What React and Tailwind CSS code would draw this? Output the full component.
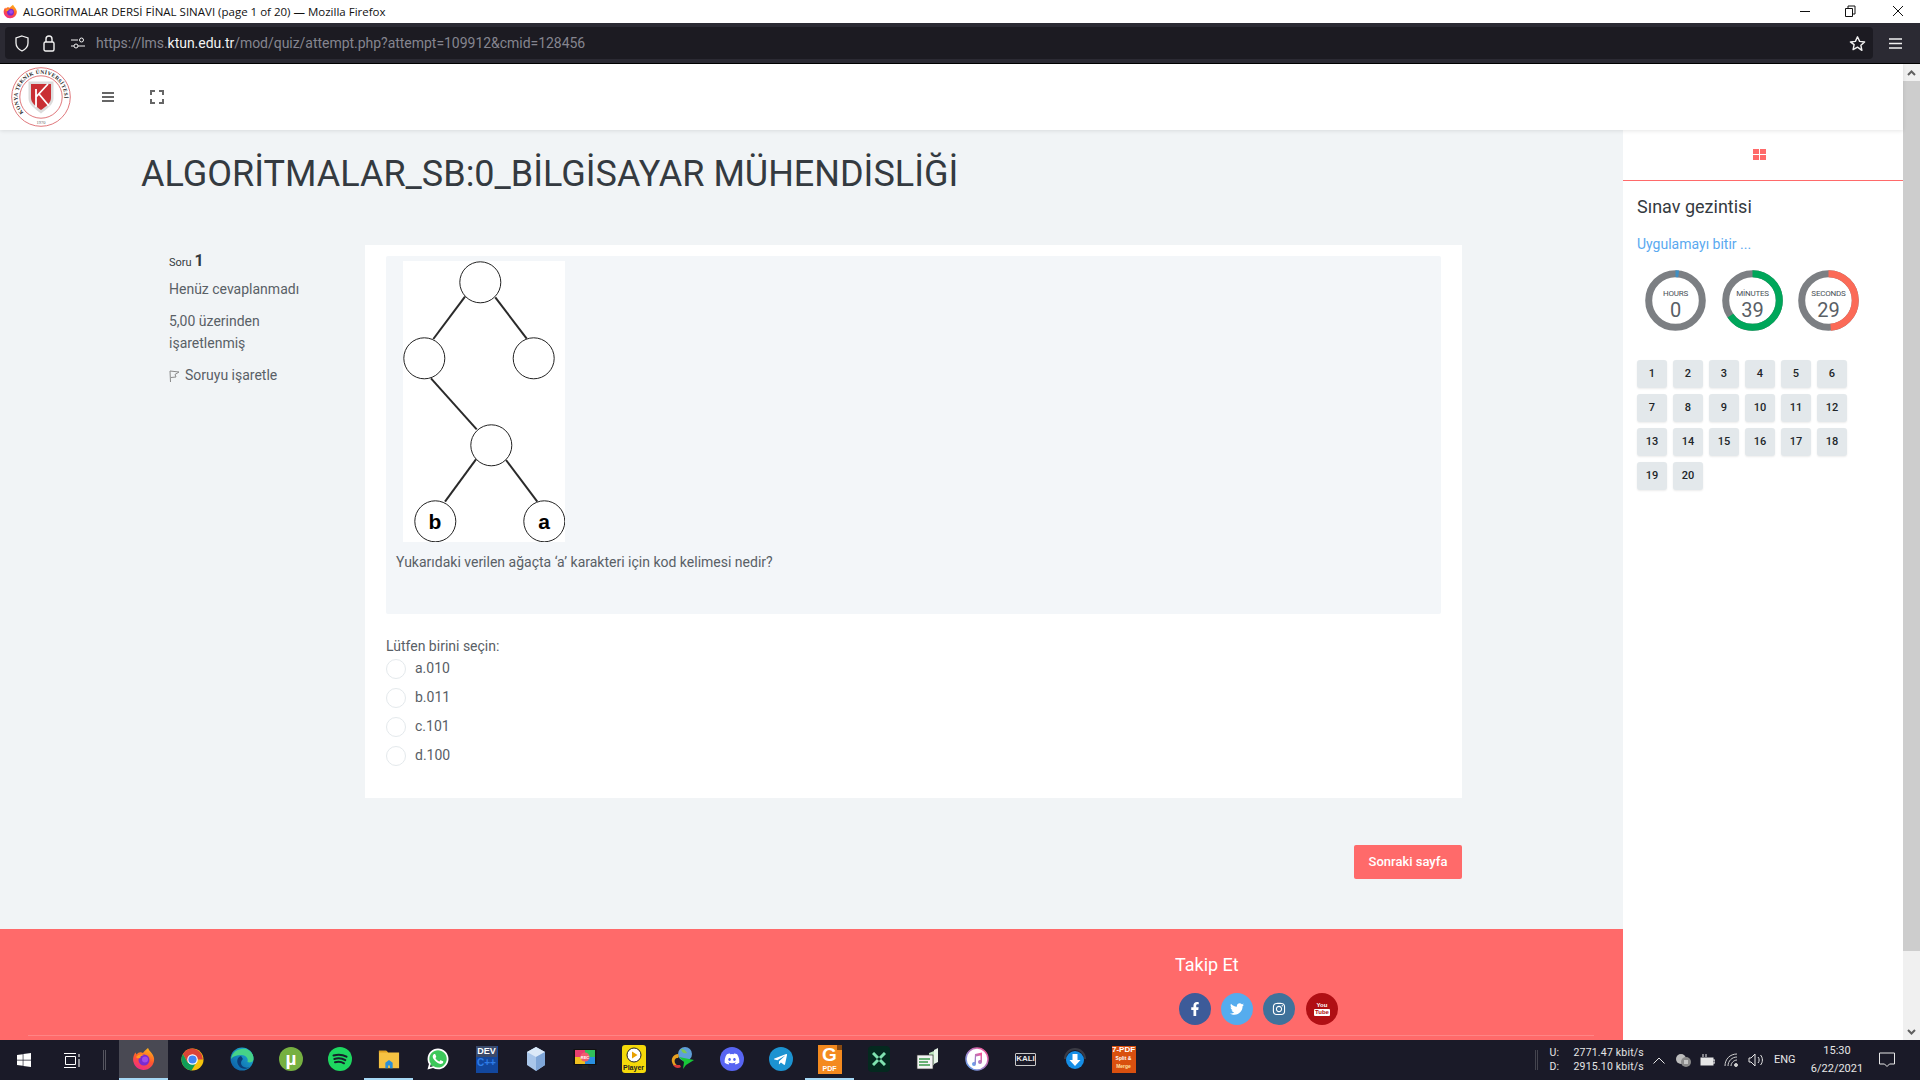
import React from "react";
import { FaFacebookF, FaTwitter, FaInstagram, FaWhatsapp, FaDiscord, FaTelegramPlane, FaWindows } from "react-icons/fa";

const Firefox = ({ s = 24 }) => (
  <svg width={s} height={s} viewBox="0 0 24 24">
    <defs>
      <linearGradient id="ffg" x1="0.7" y1="0" x2="0.3" y2="1">
        <stop offset="0" stopColor="#ffb31a" />
        <stop offset="0.5" stopColor="#ff5a2c" />
        <stop offset="1" stopColor="#f0288a" />
      </linearGradient>
    </defs>
    <path d="M16 1c1 3 5 5 6 10a10.5 10.5 0 1 1-20.6-1C2 8 2.5 6.5 3.5 5.5c.2 1 .7 1.600 1.300 2C6 5 9 4.500 11 6c1-2 3-3 5-5z" fill="url(#ffg)" />
    <circle cx="12" cy="13" r="5.500" fill="#7a2bd0" />
    <circle cx="13" cy="12.500" r="3" fill="#a04be8" />
    <path d="M4 10c2-3 6-3 8-2-2 .5-4 1-3.500 3-2 0-3 1-4.500-1z" fill="#ff9a1f" />
  </svg>
);

const Chrome = () => (
  <svg width="23" height="23" viewBox="0 0 24 24">
    <circle cx="12" cy="12" r="11.500" fill="#f4c20d" />
    <path d="M12 .5A11.500 11.500 0 0 0 2 6.300L7 15l5-3h10.900A11.500 11.500 0 0 0 12 .5z" fill="#db4437" />
    <path d="M2 6.300A11.500 11.500 0 0 0 11 23.500L16 15H7z" fill="#0f9d58" />
    <circle cx="12" cy="12" r="5.500" fill="#fff" />
    <circle cx="12" cy="12" r="4.300" fill="#4285f4" />
  </svg>
);

const Edge = () => (
  <svg width="24" height="24" viewBox="0 0 24 24">
    <defs>
      <linearGradient id="edg" x1="0" y1="1" x2="1" y2="0">
        <stop offset="0" stopColor="#0c59a4" />
        <stop offset="1" stopColor="#1fb6d8" />
      </linearGradient>
    </defs>
    <circle cx="12" cy="12" r="11.500" fill="url(#edg)" />
    <path d="M1 12C2 4 10 .5 16 2c5 1.500 8 6 7.500 10.500-.3 3-4 3.500-6 2.500 1-3-1-7-6-7-5 0-8 1-10.500 4z" fill="#46d288" />
    <path d="M11 9c-4 1-5 6-2 10 2 3 7 4 11 1-5 2-9-1-9-4 0-2 1-3 2-4-1-1-1-2-2-3z" fill="#0b3d78" />
  </svg>
);

const Torrent = () => (
  <svg width="24" height="24" viewBox="0 0 24 24">
    <circle cx="12" cy="12" r="12" fill="#76b041" />
    <text x="12" y="18" textAnchor="middle" fontFamily="Liberation Sans, sans-serif" fontWeight="700" fontSize="19" fill="#fff">µ</text>
  </svg>
);

const Spotify = () => (
  <svg width="24" height="24" viewBox="0 0 24 24">
    <circle cx="12" cy="12" r="12" fill="#1ed760" />
    <path d="M5.500 8.500c4-1.200 9-1 13 1.200M6.300 12c3.500-1 7.700-.8 11 1.100M7 15.300c3-.8 6.300-.6 9 1" fill="none" stroke="#15202b" strokeWidth="2" strokeLinecap="round" />
  </svg>
);

const Folder = () => (
  <svg width="22" height="22" viewBox="0 0 24 24">
    <path d="M1 3h8l2 2h12v17H1z" fill="#f5c242" />
    <path d="M1 3h8l2 2H1z" fill="#e0a020" />
    <path d="M8 22v-6l4-3 4 3v6h-3v-3h-2v3z" fill="#2a8fd8" />
  </svg>
);

const Whats = () => (
  <svg width="24" height="24" viewBox="0 0 24 24">
    <circle cx="12.200" cy="12" r="9.500" fill="#3cc85a" />
    <foreignObject x="0" y="0" width="24" height="24">
      <div className="flex h-6 w-6 items-center justify-center text-white">
        <FaWhatsapp size={24} />
      </div>
    </foreignObject>
  </svg>
);

const Dev = () => (
  <div className="flex h-[27px] w-[22px] flex-col items-center bg-[#12479e] font-['Liberation_Sans',sans-serif] font-bold leading-[11px]">
    <span className="bg-[#3b4a6b] px-[1px] text-[9px] text-white">DEV</span>
    <span className="text-[10px] text-[#2f7de8]">C++</span>
  </div>
);

const Cube = () => (
  <svg width="24" height="26" viewBox="0 0 24 26">
    <path d="M12 1l9 5v13l-9 6-9-6V6z" fill="#a9c6ea" />
    <path d="M12 1l9 5-9 5-9-5z" fill="#dbe9f8" />
    <path d="M12 11l9-5v13l-9 6z" fill="#7fa6d8" />
  </svg>
);

const Rec = () => (
  <svg width="24" height="24" viewBox="0 0 24 24">
    <rect x="0.500" y="2" width="23" height="16" fill="#111" />
    <rect x="2" y="3" width="10" height="7" fill="#e83f6f" />
    <rect x="12" y="3" width="10" height="7" fill="#30c05a" />
    <rect x="2" y="10" width="10" height="7" fill="#f0c020" />
    <rect x="12" y="10" width="10" height="7" fill="#2a8fe0" />
    <circle cx="12" cy="10" r="4.500" fill="#f25c6f" />
    <text x="12" y="11.500" textAnchor="middle" fontSize="4" fontWeight="700" fill="#fff" fontFamily="Liberation Sans, sans-serif">REC</text>
    <rect x="9" y="18" width="6" height="3" fill="#222" />
    <rect x="6" y="21" width="12" height="1.500" fill="#222" />
  </svg>
);

const Player = () => (
  <div className="flex h-[28px] w-[24px] flex-col items-center rounded-[3px] bg-[#f5d90a] pt-[2px]">
    <svg width="16" height="16" viewBox="0 0 16 16">
      <circle cx="8" cy="8" r="7" fill="#fff" stroke="#222" />
      <path d="M6 4.500l5.500 3.500L6 11.500z" fill="#e8a000" />
    </svg>
    <span className="font-['Liberation_Sans',sans-serif] text-[7px] font-bold leading-[9px] text-[#222]">Player</span>
  </div>
);

const Idm = () => (
  <svg width="26" height="26" viewBox="0 0 26 26">
    <circle cx="15" cy="8" r="7" fill="#5f9fd8" />
    <path d="M11 3c3 0 5 2 6 4-3 1-5 0-6-4z" fill="#7ec850" />
    <path d="M2 16c-1-4 2-8 6-8 1 1 1 3 0 4-3 0-4 2-3 5 1 2 3 3 5 3-4 2-7 0-8-4z" fill="#e8a020" />
    <path d="M3 19c2 3 5 4 8 2l-1-2c-2 0-5 0-7 0z" fill="#d83a3a" />
    <path d="M24 14l-15-3 5 5-1 7 3-4z" fill="#18c838" />
  </svg>
);

const Round = ({ bg, children }) => (
  <div className={`flex h-[24px] w-[24px] items-center justify-center rounded-full text-white ${bg}`}>{children}</div>
);

const Foxit = () => (
  <div className="relative flex h-[29px] w-[24px] flex-col items-center bg-[#f48a1f] font-['Liberation_Sans',sans-serif] font-bold text-white">
    <span className="text-[19px] leading-[20px]">G</span>
    <span className="text-[7px] leading-[8px]">PDF</span>
    <span className="absolute right-0 top-0 h-[5px] w-[5px] bg-[#8a4a10]" />
  </div>
);

const XIcon = () => (
  <div className="flex h-[26px] w-[22px] items-center justify-center rounded-[4px] bg-[#04291f]">
    <svg width="14" height="14" viewBox="0 0 14 14">
      <path d="M1 1l5 5M13 1L8 6M1 13l5-5M13 13L8 8" stroke="#7fe3b0" strokeWidth="3" />
    </svg>
  </div>
);

const Speed = () => (
  <svg width="24" height="26" viewBox="0 0 24 26">
    <path d="M18 4l4-2v14l-4 2z" fill="#e8f5e8" />
    <path d="M13 7l5-2v14l-5 2z" fill="#bfe5bf" />
    <rect x="1" y="9" width="16" height="14" fill="#f4f4f4" stroke="#333" strokeWidth="0.700" />
    <path d="M3 13h11M3 16h9M3 19h11" stroke="#3a9a4a" strokeWidth="1.300" />
  </svg>
);

const Itunes = () => (
  <svg width="24" height="26" viewBox="0 0 24 24">
    <defs>
      <linearGradient id="itg" x1="0" y1="1" x2="1" y2="0">
        <stop offset="0" stopColor="#5aa8f5" />
        <stop offset="1" stopColor="#ff4f8f" />
      </linearGradient>
    </defs>
    <circle cx="12" cy="12" r="11" fill="#fff" stroke="url(#itg)" strokeWidth="1.500" />
    <path d="M10 7l7-1.500V15a2 2 0 1 1-1.500-2V8.500L11 9.500V17a2 2 0 1 1-1.500-2z" fill="url(#itg)" />
  </svg>
);

const Kali = () => (
  <div className="flex h-[13px] w-[21px] items-center justify-center rounded-[1px] border border-[#c9c9c9] font-['Liberation_Sans',sans-serif] text-[8px] font-bold leading-none text-[#e8e8e8]">
    KALI
  </div>
);

const Download = () => (
  <svg width="26" height="26" viewBox="0 0 26 26">
    <path d="M3 13a10 10 0 0 1 20 0" fill="none" stroke="#3a3a44" strokeWidth="2" />
    <circle cx="13" cy="14" r="9" fill="#168ee6" />
    <path d="M10.500 8h5v6h3L13 20l-5.500-6h3z" fill="#fff" />
  </svg>
);

const SevenPdf = () => (
  <div className="flex h-[27px] w-[24px] flex-col items-center overflow-hidden bg-[#d9500f] font-['Liberation_Sans',sans-serif] font-bold leading-[8px] text-white">
    <span className="text-[8px]">7-PDF</span>
    <span className="text-[5px]">Split &amp;</span>
    <span className="text-[5px] text-[#ffe0a0]">Merge</span>
  </div>
);

const taskbarApps = [
  { icon: <Firefox />, active: true, on: true },
  { icon: <Chrome /> },
  { icon: <Edge /> },
  { icon: <Torrent /> },
  { icon: <Spotify /> },
  { icon: <Folder />, on: true },
  { icon: <Whats /> },
  { icon: <Dev /> },
  { icon: <Cube /> },
  { icon: <Rec /> },
  { icon: <Player /> },
  { icon: <Idm /> },
  { icon: <Round bg="bg-[#5865f2]"><FaDiscord size={16} /></Round> },
  { icon: <Round bg="bg-[#1c93d1]"><FaTelegramPlane size={15} /></Round> },
  { icon: <Foxit />, on: true },
  { icon: <XIcon /> },
  { icon: <Speed /> },
  { icon: <Itunes /> },
  { icon: <Kali /> },
  { icon: <Download /> },
  { icon: <SevenPdf /> },
];

const Logo = () => (
  <svg width="60" height="60" viewBox="0 0 60 60">
    <circle cx="30" cy="30" r="29.300" fill="#fff" stroke="#e0787c" strokeWidth="1" />
    <circle cx="30" cy="30" r="21.200" fill="#fff" stroke="#e0787c" strokeWidth="1" />
    <defs>
      <path id="logoarc" d="M12.500 45.500A23.300 23.300 0 1 1 47.500 45.500" fill="none" />
    </defs>
    <text fontFamily="Liberation Serif, serif" fontWeight="700" fontSize="5.400" fill="#222" letterSpacing="0.350">
      <textPath href="#logoarc">KONYA TEKNİK ÜNİVERSİTESİ</textPath>
    </text>
    <text x="30" y="57" textAnchor="middle" fontFamily="Liberation Serif, serif" fontSize="4.500" fill="#666">1970</text>
    <path d="M17.500 14.500h25v17c0 6-6.500 10.500-12.500 15-6-4.500-12.500-9-12.500-15z" fill="#dcdcdc" />
    <path d="M20 17h20v14c0 5-5 8.500-10 12-5-3.500-10-7-10-12z" fill="#c92f33" />
    <path d="M25 22v18M25 30l12-13M28 27l10 12" stroke="#fff" strokeWidth="1.800" fill="none" />
  </svg>
);

const Tree = () => {
  const circles = [
    [77.3, 21.3],
    [21.3, 97.3],
    [130.7, 97.3],
    [88.3, 184.3],
    [32.3, 260.3],
    [141.3, 260.3],
  ];
  const lines = [
    [62, 35.7, 30.3, 78],
    [92.3, 36.3, 123.7, 77.7],
    [28, 117.3, 73.7, 168.3],
    [73, 198.3, 42, 240.7],
    [103, 199, 134.3, 240.7],
  ];
  return (
    <svg width="162" height="281" viewBox="0 0 162 281" className="block bg-white">
      {lines.map((l, i) => (
        <line key={i} x1={l[0]} y1={l[1]} x2={l[2]} y2={l[3]} stroke="#2a2a2a" strokeWidth="2" />
      ))}
      {circles.map((c, i) => (
        <circle key={i} cx={c[0]} cy={c[1]} r="20.500" fill="#fff" stroke="#222" strokeWidth="1" />
      ))}
      <text x="32" y="268" textAnchor="middle" fontFamily="Liberation Sans, sans-serif" fontWeight="700" fontSize="21" fill="#000">b</text>
      <text x="141" y="268" textAnchor="middle" fontFamily="Liberation Sans, sans-serif" fontWeight="700" fontSize="21" fill="#000">a</text>
    </svg>
  );
};

const Timer = ({ label, value, deg, color }) => {
  const r = 26.8;
  const c = 2 * Math.PI * r;
  return (
    <svg width="61" height="61" viewBox="0 0 61 61">
      <circle cx="30.500" cy="30.500" r={r} fill="none" stroke="#7c7f83" strokeWidth="7" />
      <circle
        cx="30.500"
        cy="30.500"
        r={r}
        fill="none"
        stroke={color}
        strokeWidth="7"
        strokeDasharray={`${(deg / 360) * c} ${c}`}
        transform="rotate(-90 30.500 30.500)"
      />
      <text x="30.500" y="26" textAnchor="middle" fontFamily="Roboto, sans-serif" fontSize="8" letterSpacing="-0.200" fill="#495057">{label}</text>
      <text x="30.500" y="47" textAnchor="middle" fontFamily="Roboto, sans-serif" fontSize="20" fill="#596066">{value}</text>
    </svg>
  );
};

const navNumbers = Array.from({ length: 20 }, (_, i) => i + 1);
const options = ["a.010", "b.011", "c.101", "d.100"];

export default function App() {
  return (
    <div className="flex h-[1080px] w-[1920px] flex-col overflow-hidden bg-white font-['Roboto',sans-serif] text-[14px] text-[#596066]">
      {/* Window title bar */}
      <div className="flex h-[23px] shrink-0 items-center bg-white pl-[3px]">
        <Firefox s={15} />
        <span className="ml-[5px] font-['Open_Sans',sans-serif] text-[11.500px] text-[#111]">
          ALGORİTMALAR DERSİ FİNAL SINAVI (page 1 of 20) — Mozilla Firefox
        </span>
        <div className="ml-auto flex items-center pb-[2px] text-[#111]">
          <svg width="45" height="20" viewBox="0 0 45 20">
            <path d="M17 10.500h10" stroke="#111" />
          </svg>
          <svg width="45" height="20" viewBox="0 0 45 20">
            <path d="M17.500 7.500h7v8h-7zM20 7.500V5h7v8h-2.500" fill="none" stroke="#111" />
          </svg>
          <svg width="47" height="20" viewBox="0 0 47 20">
            <path d="M20 5l10 10M30 5L20 15" stroke="#111" />
          </svg>
        </div>
      </div>

      {/* Browser toolbar */}
      <div className="flex h-[41px] shrink-0 items-center border-b border-black bg-[#2b2a33] pl-[5px] pr-[15px]">
        <div className="flex h-[32px] w-[1868px] items-center rounded-[4px] bg-[#1c1b22] pl-[10px] pr-[7px]">
          <svg width="14" height="17" viewBox="0 0 14 17" fill="none" stroke="#f2f2f2" strokeWidth="1.300">
            <path d="M7 1l6 2v5c0 4-3 6.500-6 8-3-1.500-6-4-6-8V3z" />
          </svg>
          <svg className="ml-[14px]" width="12" height="17" viewBox="0 0 12 17" fill="none" stroke="#f2f2f2" strokeWidth="1.400">
            <rect x="1" y="7" width="10" height="9" rx="1.500" />
            <path d="M3 7V4a3 3 0 0 1 6 0v3" />
          </svg>
          <svg className="ml-[16px]" width="14" height="12" viewBox="0 0 14 12" fill="none" stroke="#f2f2f2" strokeWidth="1">
            <path d="M0 3h7M0 9h3" />
            <circle cx="10.500" cy="3" r="2" />
            <circle cx="5" cy="9" r="2" />
            <path d="M7 9h7" />
          </svg>
          <span className="ml-[11px] pt-[1px] text-[14px] tracking-[-0.030px] text-[#85858f]">
            https://lms.<span className="text-[#f2f2f2]">ktun.edu.tr</span>/mod/quiz/attempt.php?attempt=109912&amp;cmid=128456
          </span>
          <svg className="ml-auto" width="17" height="17" viewBox="0 0 24 24" fill="none" stroke="#f2f2f2" strokeWidth="2" strokeLinejoin="round">
            <path d="M12 2.500l3 6.500 7 .8-5.200 4.800 1.400 7L12 17.200 5.800 20.600l1.400-7L2 9.800 9 9z" />
          </svg>
        </div>
        <svg className="ml-[16px]" width="13" height="11" viewBox="0 0 13 11" stroke="#f2f2f2" strokeWidth="1.300">
          <path d="M0 1h13M0 5.500h13M0 10h13" />
        </svg>
      </div>

      <div className="flex h-[976px] shrink-0">
        <div className="flex w-[1903px] flex-col">
          {/* Site header */}
          <div className="relative z-10 flex h-[66px] shrink-0 items-center bg-white pl-[11px] shadow-[0_1px_4px_rgba(0,0,0,0.1)]">
            <Logo />
            <svg className="ml-[31px]" width="12" height="10" viewBox="0 0 12 10" stroke="#666" strokeWidth="2">
              <path d="M0 1h12M0 5h12M0 9h12" />
            </svg>
            <svg className="ml-[36px]" width="14" height="14" viewBox="0 0 14 14" fill="none" stroke="#666" strokeWidth="2">
              <path d="M1 5V1h4M9 1h4v4M13 9v4H9M5 13H1V9" />
            </svg>
          </div>

          <div className="flex h-[910px] shrink-0">
            {/* Main column */}
            <div className="flex w-[1623px] flex-col bg-[#f1f4f6]">
              <h1 className="pl-[141px] pt-[22px] text-[36px] font-normal leading-[44px] text-[#343a40]">
                ALGORİTMALAR_SB:0_BİLGİSAYAR MÜHENDİSLİĞİ
              </h1>
              <div className="mt-[49px] flex pl-[169px]">
                <div className="w-[196px] pt-[6px]">
                  <div className="flex items-baseline text-[#343a40]">
                    <span className="text-[11px]">Soru</span>
                    <span className="ml-[3px] text-[16px] font-bold leading-[20px]">1</span>
                  </div>
                  <div className="mt-[6px] leading-[22px]">Henüz cevaplanmadı</div>
                  <div className="mt-[10px] w-[120px] leading-[22px]">5,00 üzerinden işaretlenmiş</div>
                  <div className="mt-[10px] flex items-center leading-[22px]">
                    <svg className="mt-[3px]" width="11" height="14" viewBox="0 0 11 14" fill="none" stroke="#8a8a8a" strokeWidth="1">
                      <path d="M1.500 13L1 2l9 1-4 2.500L7 8 2 8.500" />
                    </svg>
                    <span className="ml-[5px]">Soruyu işaretle</span>
                  </div>
                </div>
                <div className="h-[553px] w-[1097px] bg-white px-[21px] pt-[11px]">
                  <div className="h-[358px] rounded-[2px] bg-[#f3f6f9] pl-[17px] pt-[5px]">
                    <Tree />
                    <p className="-ml-[7px] mt-[9px] leading-[22px]">
                      Yukarıdaki verilen ağaçta ‘a’ karakteri için kod kelimesi nedir?
                    </p>
                  </div>
                  <div className="mt-[21px] leading-[22px]">Lütfen birini seçin:</div>
                  <div className="-mt-[3px] flex flex-col">
                    {options.map((o) => (
                      <div key={o} className="flex h-[29px] items-center">
                        <span className="h-[20px] w-[20px] rounded-full border border-[#e4e9ec] bg-white" />
                        <span className="ml-[9px]">{o}</span>
                      </div>
                    ))}
                  </div>
                </div>
              </div>
              <div className="mt-[47px] flex justify-end pr-[161px]">
                <div className="flex h-[34px] w-[108px] items-center justify-center rounded-[2px] bg-[#ff6a6a] text-[13px] font-medium text-white">
                  Sonraki sayfa
                </div>
              </div>
              {/* Footer */}
              <div className="mt-auto flex h-[111px] shrink-0 flex-col bg-[#ff6a6a]">
                <div className="pl-[1175px] pt-[25px] text-[18px] leading-[22px] text-white">Takip Et</div>
                <div className="mt-[17px] flex gap-[10px] pl-[1179px]">
                  <span className="flex h-[32px] w-[32px] items-center justify-center rounded-full bg-[#3d5b99] text-white"><FaFacebookF size={14} /></span>
                  <span className="flex h-[32px] w-[32px] items-center justify-center rounded-full bg-[#55acee] text-white"><FaTwitter size={14} /></span>
                  <span className="flex h-[32px] w-[32px] items-center justify-center rounded-full bg-[#3f729b] text-white"><FaInstagram size={14} /></span>
                  <span className="ml-[1px] flex h-[32px] w-[32px] flex-col items-center justify-center rounded-full bg-[#b00f14] font-['Liberation_Sans',sans-serif] text-[6px] font-bold leading-[7px] text-white">
                    <span>You</span>
                    <span className="rounded-[1px] bg-white px-[1px] text-[#b00f14]">Tube</span>
                  </span>
                </div>
                <div className="ml-[28px] mr-[29px] mt-[10px] h-px bg-[#ff8585]" />
              </div>
            </div>

            {/* Sidebar */}
            <div className="w-[280px] bg-white">
              <div className="flex h-[51px] items-center justify-center border-b border-[#ff6a6a] pb-[2px] pr-[7px]">
                <svg width="13" height="11" viewBox="0 0 13 11" fill="#ff6a6a">
                  <rect width="6" height="5" />
                  <rect x="7" width="6" height="5" />
                  <rect y="6" width="6" height="5" />
                  <rect x="7" y="6" width="6" height="5" />
                </svg>
              </div>
              <div className="px-[14px]">
                <h2 className="mt-[14px] text-[18px] font-normal leading-[24px] text-[#343a40]">Sınav gezintisi</h2>
                <div className="mt-[15px] leading-[20px] text-[#5aa9f0]">Uygulamayı bitir ...</div>
                <div className="ml-[8px] mt-[16px] flex gap-[15.500px]">
                  <Timer label="HOURS" value="0" deg={7} color="#3d8fc4" />
                  <Timer label="MİNUTES" value="39" deg={234} color="#00a65a" />
                  <Timer label="SECONDS" value="29" deg={174} color="#fb6a57" />
                </div>
                <div className="mt-[29px] grid grid-cols-[repeat(6,30px)] gap-x-[6px] gap-y-[6px]">
                  {navNumbers.map((n) => (
                    <div key={n} className="flex h-[28px] items-center justify-center rounded-[3px] bg-[#e3e8eb] text-[11px] font-medium text-[#212529] shadow-[0_1px_2px_rgba(0,0,0,0.08)]">
                      {n}
                    </div>
                  ))}
                </div>
              </div>
            </div>
          </div>
        </div>

        {/* Scrollbar */}
        <div className="flex w-[17px] flex-col bg-[#f0f0f0]">
          <div className="flex h-[17px] items-center justify-center">
            <svg width="9" height="6" viewBox="0 0 9 6" fill="none" stroke="#606060" strokeWidth="2"><path d="M1 5l3.500-3.500L8 5" /></svg>
          </div>
          <div className="h-[870px] bg-[#cdcdcd]" />
          <div className="mt-auto flex h-[17px] items-center justify-center">
            <svg width="9" height="6" viewBox="0 0 9 6" fill="none" stroke="#606060" strokeWidth="2"><path d="M1 1l3.500 3.500L8 1" /></svg>
          </div>
        </div>
      </div>

      {/* Windows taskbar */}
      <div className="flex h-[40px] shrink-0 items-stretch bg-[#1a1a28] text-[#e6e6e6]">
        <div className="flex w-[48px] items-center justify-center text-white"><FaWindows size={16} /></div>
        <div className="flex w-[48px] items-center justify-center">
          <svg width="16" height="15" viewBox="0 0 16 15" fill="none" stroke="#fff" strokeWidth="1">
            <path d="M0 .5h12M1.500 3.500h10v8h-10zM0 14.500h12M15 1v3M15 6v8" />
          </svg>
        </div>
        <div className="flex w-[23px] items-center">
          <span className="ml-[7px] h-[20px] w-[3px] border-x border-[#55555f]" />
        </div>
        {taskbarApps.map((a, i) => (
          <div
            key={i}
            className={`flex w-[49px] flex-col items-center justify-center border-b-2 ${a.active ? "bg-[#494953]" : ""} ${a.on ? "border-[#a6d8f5]" : "border-transparent"}`}
          >
            {a.icon}
          </div>
        ))}
        <div className="ml-auto flex items-center pr-[25px]">
          <span className="h-[20px] w-[3px] border-x border-[#44444e]" />
          <div className="ml-[11px] grid grid-cols-[24px_auto] text-[10.500px] leading-[14px] tracking-[0.200px]">
            <span>U:</span><span>2771.47 kbit/s</span>
            <span>D:</span><span>2915.10 kbit/s</span>
          </div>
          <svg className="ml-[9px]" width="12" height="7" viewBox="0 0 12 7" fill="none" stroke="#e6e6e6" strokeWidth="1"><path d="M.5 6.500L6 1l5.500 5.500" /></svg>
          <svg className="ml-[10px]" width="16" height="14" viewBox="0 0 16 14">
            <circle cx="6" cy="6" r="5" fill="#bdbdbd" />
            <circle cx="11" cy="9" r="5" fill="#8a8a8a" />
            <path d="M10 7v4M12 7v4" stroke="#fff" strokeWidth="1" />
          </svg>
          <svg className="ml-[8px]" width="16" height="14" viewBox="0 0 16 14" fill="none" stroke="#e6e6e6" strokeWidth="1">
            <rect x="2" y="5" width="12" height="7" fill="#e6e6e6" />
            <path d="M14 7h2v3h-2M4 1v3M7 1v3" />
          </svg>
          <svg className="ml-[9px]" width="15" height="14" viewBox="0 0 15 14" fill="none" stroke="#d0d0d0" strokeWidth="1">
            <path d="M1 13C1 6 6 1 13 1M4 13c0-5 4-9 9-9M7 13c0-3 3-6 6-6" />
            <circle cx="12" cy="12" r="1.500" fill="#d0d0d0" />
          </svg>
          <svg className="ml-[9px]" width="16" height="14" viewBox="0 0 16 14" fill="none" stroke="#e6e6e6" strokeWidth="1">
            <path d="M1 5h2l4-4v12l-4-4H1zM10 4c1.500 1.500 1.500 4.500 0 6M12.500 2c2.500 2.500 2.500 7.500 0 10" />
          </svg>
          <span className="ml-[10px] w-[24px] text-[11px]">ENG</span>
          <div className="ml-[11px] flex w-[56px] flex-col items-center text-[11px] leading-[18px]">
            <span>15:30</span>
            <span>6/22/2021</span>
          </div>
          <svg className="ml-[14px]" width="16" height="16" viewBox="0 0 16 16" fill="none" stroke="#e6e6e6" strokeWidth="1">
            <path d="M.5 1h15v11h-5l-2.500 2.500L5.500 12h-5z" />
          </svg>
        </div>
      </div>
    </div>
  );
}
